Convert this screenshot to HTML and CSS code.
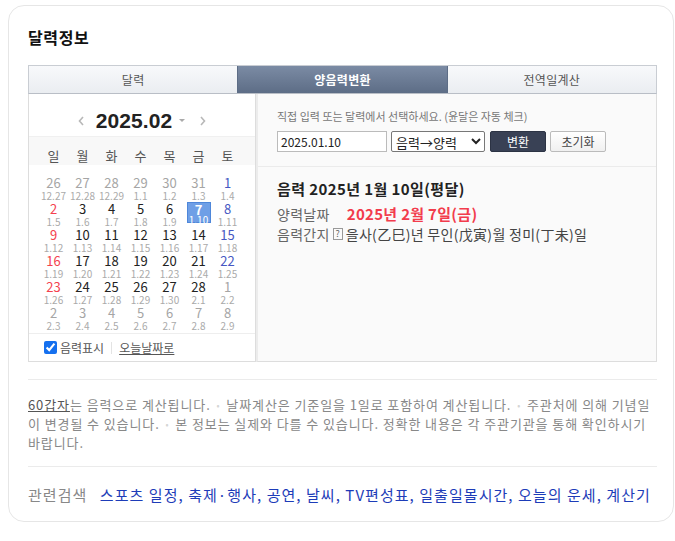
FILE: index.html
```html
<!DOCTYPE html>
<html>
<head>
	<meta charset="utf-8">
	<meta name="viewport" content="width=device-width, initial-scale=1">
	<title>달력정보</title>
	<link rel="stylesheet" href="styles.css">
</head>
<body>
<div class="card">
	<h2 class="title">달력정보</h2>

	<!-- tabs -->
	<ul class="tabs">
		<li>달력</li>
		<li class="on">양음력변환</li>
		<li>전역일계산</li>
	</ul>

	<div class="convert">
		<!-- mini calendar -->
		<div class="cal">
			<div class="cal-head">
				<svg class="arrow prev" viewBox="0 0 6 10" width="6" height="10"><path d="M5 1 L1.5 5 L5 9" fill="none" stroke="#b8b8b8" stroke-width="1.6"/></svg>
				<strong class="ym">2025.02</strong>
				<span class="caret"></span>
				<svg class="arrow next" viewBox="0 0 6 10" width="6" height="10"><path d="M1 1 L4.5 5 L1 9" fill="none" stroke="#b8b8b8" stroke-width="1.6"/></svg>
			</div>
			<div class="week">
				<span>일</span><span>월</span><span>화</span><span>수</span><span>목</span><span>금</span><span>토</span>
			</div>
			<div class="days">
				<div class="d off"><b>26</b><i>12.27</i></div>
				<div class="d off"><b>27</b><i>12.28</i></div>
				<div class="d off"><b>28</b><i>12.29</i></div>
				<div class="d off"><b>29</b><i>1.1</i></div>
				<div class="d off"><b>30</b><i>1.2</i></div>
				<div class="d off"><b>31</b><i>1.3</i></div>
				<div class="d sat"><b>1</b><i>1.4</i></div>

				<div class="d sun"><b>2</b><i>1.5</i></div>
				<div class="d"><b>3</b><i>1.6</i></div>
				<div class="d"><b>4</b><i>1.7</i></div>
				<div class="d"><b>5</b><i>1.8</i></div>
				<div class="d"><b>6</b><i>1.9</i></div>
				<div class="d sel"><b>7</b><i>1.10</i></div>
				<div class="d sat"><b>8</b><i>1.11</i></div>

				<div class="d sun"><b>9</b><i>1.12</i></div>
				<div class="d"><b>10</b><i>1.13</i></div>
				<div class="d"><b>11</b><i>1.14</i></div>
				<div class="d"><b>12</b><i>1.15</i></div>
				<div class="d"><b>13</b><i>1.16</i></div>
				<div class="d"><b>14</b><i>1.17</i></div>
				<div class="d sat"><b>15</b><i>1.18</i></div>

				<div class="d sun"><b>16</b><i>1.19</i></div>
				<div class="d"><b>17</b><i>1.20</i></div>
				<div class="d"><b>18</b><i>1.21</i></div>
				<div class="d"><b>19</b><i>1.22</i></div>
				<div class="d"><b>20</b><i>1.23</i></div>
				<div class="d"><b>21</b><i>1.24</i></div>
				<div class="d sat"><b>22</b><i>1.25</i></div>

				<div class="d sun"><b>23</b><i>1.26</i></div>
				<div class="d"><b>24</b><i>1.27</i></div>
				<div class="d"><b>25</b><i>1.28</i></div>
				<div class="d"><b>26</b><i>1.29</i></div>
				<div class="d"><b>27</b><i>1.30</i></div>
				<div class="d"><b>28</b><i>2.1</i></div>
				<div class="d off"><b>1</b><i>2.2</i></div>

				<div class="d off"><b>2</b><i>2.3</i></div>
				<div class="d off"><b>3</b><i>2.4</i></div>
				<div class="d off"><b>4</b><i>2.5</i></div>
				<div class="d off"><b>5</b><i>2.6</i></div>
				<div class="d off"><b>6</b><i>2.7</i></div>
				<div class="d off"><b>7</b><i>2.8</i></div>
				<div class="d off"><b>8</b><i>2.9</i></div>
			</div>
			<div class="cal-foot">
				<label class="chk"><input type="checkbox" checked> 음력표시</label>
				<span class="bar"></span>
				<a href="#" class="today">오늘날짜로</a>
			</div>
		</div>

		<!-- converter -->
		<div class="conv">
			<div class="conv-form">
				<p class="hint">직접 입력 또는 달력에서 선택하세요. (윤달은 자동 체크)</p>
				<div class="row">
					<input type="text" class="date" value="2025.01.10">
					<select class="mode">
						<option>음력→양력</option>
						<option>양력→음력</option>
					</select>
					<button class="btn go">변환</button>
					<button class="btn reset">초기화</button>
				</div>
			</div>
			<div class="result">
				<p class="res-title">음력 2025년 1월 10일(평달)</p>
				<p class="res-line"><span class="lbl">양력날짜</span><strong class="solar">2025년 2월 7일(금)</strong></p>
				<p class="res-line"><span class="lbl gz">음력간지</span><span class="qm">?</span>을사(乙巳)년 무인(戊寅)월 정미(丁未)일</p>
			</div>
		</div>
	</div>

	<p class="notes">
		<a href="#" class="u">60갑자</a>는 음력으로 계산됩니다. <span class="dot">•</span> 날짜계산은 기준일을 1일로 포함하여 계산됩니다. <span class="dot">•</span> 주관처에 의해 기념일이 변경될 수 있습니다. <span class="dot">•</span> 본 정보는 실제와 다를 수 있습니다. 정확한 내용은 각 주관기관을 통해 확인하시기 바랍니다.
	</p>

	<div class="related">
		<span class="rel-lbl">관련검색</span>
		<a href="#">스포츠 일정</a>, <a href="#">축제·행사</a>, <a href="#">공연</a>, <a href="#">날씨</a>, <a href="#">TV편성표</a>, <a href="#">일출일몰시간</a>, <a href="#">오늘의 운세</a>, <a href="#">계산기</a>
	</div>
</div>
</body>
</html>
```

FILE: styles.css
```css
* {
  box-sizing: border-box;
  margin: 0;
  padding: 0;
}
body {
  background: #fff;
  font-family: "Noto Sans CJK KR", "Noto Sans", sans-serif;
  color: #333;
}
a {
  color: inherit;
  text-decoration: none;
}

.card {
  margin: 5px 1px 0 8px;
  height: 517px;
  border: 1px solid #e6e6e6;
  border-radius: 16px;
  padding: 19px 16px 0 19px;
}
.title {
  font-size: 16px;
  line-height: 24px;
  font-weight: bold;
  color: #111;
  letter-spacing: 0.6px;
  margin-bottom: 16px;
}

/* tabs */
.tabs {
  list-style: none;
  display: flex;
  border: 1px solid #c9cdd3;
  border-bottom-color: #b9bec6;
}
.tabs li {
  flex: 1;
  height: 27px;
  line-height: 27px;
  text-align: center;
  font-size: 12px;
  color: #555;
  letter-spacing: 0.3px;
  background: linear-gradient(#f8f9fb, #eaedf1);
}
.tabs li + li {
  border-left: 1px solid #c9cdd3;
}
.tabs li.on {
  color: #fff;
  font-weight: bold;
  background: linear-gradient(#7b8ba4, #5d6d86);
  border-left-color: #5d6d86;
}
.tabs li.on + li {
  border-left-color: #5d6d86;
}

.convert {
  display: flex;
  height: 268px;
}

/* mini calendar */
.cal {
  width: 228px;
  border: 1px solid #ddd;
  border-top: 0;
  display: flex;
  flex-direction: column;
}
.cal-head {
  height: 42px;
  display: flex;
  align-items: center;
  justify-content: center;
  padding-top: 11px;
}
.cal-head .arrow {
  display: block;
}
.cal-head .prev {
  margin-right: 12px;
}
.cal-head .next {
  margin-left: 15px;
}
.cal-head .ym {
  font-family: "Liberation Sans", sans-serif;
  font-size: 21px;
  line-height: 24px;
  color: #222;
  letter-spacing: 0.1px;
}
.cal-head .caret {
  width: 0;
  height: 0;
  border-left: 3px solid transparent;
  border-right: 3px solid transparent;
  border-top: 3px solid #aaa;
  margin-left: 7px;
}
.week {
  display: grid;
  grid-template-columns: repeat(7, 29px);
  padding: 11px 0 0 10px;
  height: 29px;
  background: #f8f8f8;
  border-top: 1px solid #f0f0f0;
}
.week span {
  text-align: center;
  font-size: 13px;
  line-height: 16px;
  color: #555;
}
.days {
  display: grid;
  grid-template-columns: repeat(7, 29px);
  grid-auto-rows: 26px;
  padding: 11px 0 0 10px;
  flex: 1;
}
.d {
  display: flex;
  flex-direction: column;
  align-items: center;
}
.d b {
  font-weight: normal;
  font-size: 13px;
  line-height: 14px;
  color: #222;
}
.d i {
  font-style: normal;
  font-size: 10px;
  line-height: 11px;
  color: #aaa;
}
.d.sun b { color: #f4424f; }
.d.sat b { color: #4657c2; }
.d.off b { color: #a5a5a5; }
.d.sel {
  width: 24px;
  height: 21px;
  margin: 0 auto;
  background: #6f9fe6;
  border: 1px solid #4e87da;
}
.d.sel b {
  color: #fff;
  font-weight: bold;
  line-height: 11px;
  margin-top: 1px;
}
.d.sel i {
  color: #fff;
  line-height: 9px;
}
.cal-foot {
  height: 28px;
  border-top: 1px solid #eee;
  display: flex;
  align-items: center;
  padding-left: 15px;
  font-size: 12px;
  color: #555;
}
.chk {
  display: flex;
  align-items: center;
}
.chk input {
  width: 13px;
  height: 13px;
  margin-right: 3px;
  accent-color: #1570ef;
}
.cal-foot .bar {
  width: 1px;
  height: 12px;
  background: #e3e3e3;
  margin: 0 7px;
}
.today {
  text-decoration: underline;
}

/* converter */
.conv {
  flex: 1;
  border: 1px solid #ddd;
  border-top: 0;
  border-left: 2px solid #ececec;
  background: #fafafa;
}
.conv-form {
  padding: 15px 0 14px 19px;
  border-bottom: 1px solid #ebebeb;
}
.hint {
  font-size: 11px;
  line-height: 14px;
  color: #777;
  margin-bottom: 8px;
}
.row {
  display: flex;
  gap: 4px;
  height: 21px;
}
.date {
  width: 110px;
  height: 21px;
  border: 1px solid #bbb;
  padding-left: 3px;
  font-family: "Noto Sans CJK KR", sans-serif;
  font-size: 12px;
  color: #222;
  background: #fff;
}
.mode {
  width: 94px;
  height: 21px;
  border: 1px solid #777;
  border-radius: 2px;
  font-family: "Noto Sans CJK KR", sans-serif;
  font-size: 13px;
  color: #222;
  background: #fff;
}
.btn {
  height: 21px;
  border-radius: 2px;
  font-family: "Noto Sans CJK KR", sans-serif;
  font-size: 12px;
  line-height: 19px;
}
.btn.go {
  width: 56px;
  margin-left: 1px;
  color: #fff;
  background: #394155;
  border: 1px solid #2c3344;
}
.btn.reset {
  width: 56px;
  color: #444;
  background: linear-gradient(#fff, #f0f0f0);
  border: 1px solid #bbb;
}
.result {
  padding: 12px 0 0 19px;
}
.res-title {
  font-size: 15px;
  line-height: 20px;
  font-weight: bold;
  color: #222;
  letter-spacing: 0.4px;
  margin-bottom: 5px;
}
.res-line {
  font-size: 14px;
  line-height: 20px;
  color: #444;
  letter-spacing: 0.3px;
  display: flex;
  align-items: center;
}
.res-line .lbl {
  color: #666;
  margin-right: 17px;
}
.res-line .gz {
  margin-right: 3px;
}
.solar {
  color: #f23c4c;
  font-size: 15px;
}
.qm {
  display: inline-block;
  width: 10px;
  height: 12px;
  border: 1px solid #999;
  font-size: 9px;
  line-height: 10px;
  letter-spacing: 0;
  text-align: center;
  color: #666;
  margin-right: 3px;
}

/* notes */
.notes {
  margin-top: 17px;
  border-top: 1px solid #ebebeb;
  border-bottom: 1px solid #ebebeb;
  padding: 15px 0 14px;
  font-size: 13px;
  line-height: 19px;
  letter-spacing: 0.9px;
  color: #888;
}
.notes .u {
  color: #555;
  text-decoration: underline;
}
.notes .dot {
  color: #d5d5d5;
  font-size: 9px;
  line-height: 10px;
  margin: 0 2px;
  vertical-align: 1px;
}

/* related searches */
.related {
  padding-top: 18px;
  font-size: 15px;
  line-height: 20px;
  letter-spacing: 1.05px;
  white-space: nowrap;
  color: #1d3cb8;
}
.rel-lbl {
  color: #888;
  margin-right: 8px;
}
.related a {
  color: #1d3cb8;
}
```
